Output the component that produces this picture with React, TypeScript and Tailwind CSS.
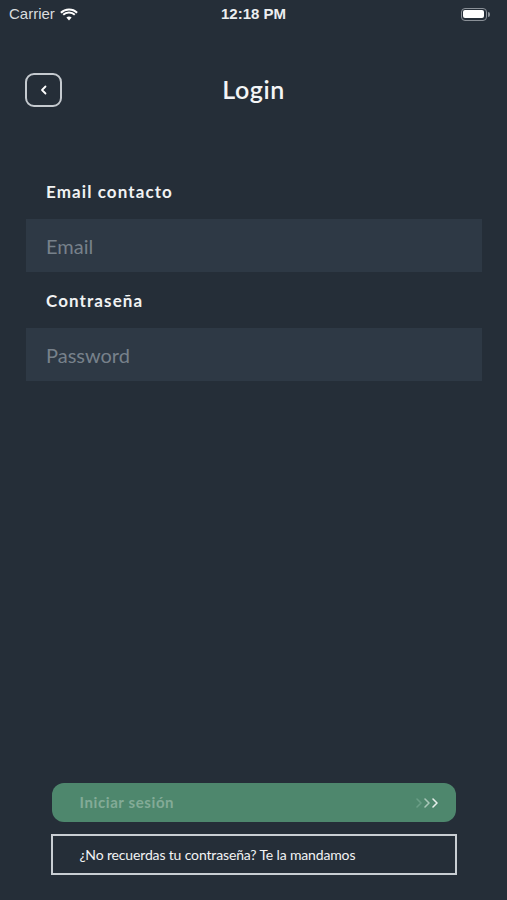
import React from 'react';

const font = { fontFamily: 'Lato, "Noto Sans", sans-serif' };

function StatusBar() {
  return (
    <div className="flex items-center justify-between h-[28px] px-[9px] text-white" style={{ fontFamily: '"Liberation Sans", Arial, sans-serif' }}>
      <div className="flex items-center gap-[5px] w-[120px]">
        <span className="text-[15px] text-[#d9dcdf]">Carrier</span>
        <svg width="18" height="13" viewBox="0 0 18 13" fill="#ffffff">
          <path d="M9 12.5l2.6-2.9a3.8 3.8 0 0 0-5.2 0z" />
          <path d="M9 5.6c2 0 3.8.8 5.1 2l1.4-1.6A9.3 9.3 0 0 0 9 3.4a9.3 9.3 0 0 0-6.5 2.6l1.4 1.6A7.2 7.2 0 0 1 9 5.6z" />
          <path d="M9 0.5C5.6 0.5 2.5 1.8 0.2 3.9l1.4 1.6A10.9 10.9 0 0 1 9 2.6c2.8 0 5.4 1.1 7.4 2.9l1.4-1.6A13 13 0 0 0 9 0.5z" />
        </svg>
      </div>
      <span className="text-[15px] font-bold text-[#eceef0]">12:18 PM</span>
      <div className="flex justify-end w-[120px] pr-[8px]">
        <div className="flex items-center">
          <div className="w-[26px] h-[13px] rounded-[4px] border border-[#8a9097] p-[1.5px]">
            <div className="w-full h-full rounded-[2px] bg-white" />
          </div>
          <div className="w-[2px] h-[5px] rounded-r-sm bg-[#8a9097] ml-[1px]" />
        </div>
      </div>
    </div>
  );
}

function Field({ label, placeholder, type }: { label: string; placeholder: string; type: string }) {
  return (
    <div className="flex flex-col">
      <label className="pl-[20px] h-[54px] flex items-center text-[17px] font-bold tracking-[1.1px] text-[#f1f2f3]">
        {label}
      </label>
      <input
        type={type}
        placeholder={placeholder}
        className="h-[53px] bg-[#2e3945] px-[20px] text-[20px] text-white placeholder:text-[#77818b] outline-none"
        style={font}
      />
    </div>
  );
}

export default function App() {
  return (
    <div className="flex flex-col w-[507px] h-[900px] bg-[#252e38]" style={font}>
      <StatusBar />
      <div className="relative flex items-center justify-center h-[64px] mt-[30px]">
        <button className="absolute left-[25px] top-[15px] w-[37px] h-[34px] rounded-[9px] border-2 border-[#c5cacf] flex items-center justify-center">
          <svg width="10" height="12" viewBox="0 0 10 12" fill="none" stroke="#ffffff" strokeWidth="1.8" strokeLinecap="round" strokeLinejoin="round">
            <path d="M6.5 2.5L3 6l3.5 3.5" />
          </svg>
        </button>
        <h1 className="text-[25px] font-semibold tracking-[0.6px] text-[#f4f5f6]">Login</h1>
      </div>
      <div className="flex flex-col px-[26px] mt-[43px] gap-[2px] w-[508px]">
        <Field label="Email contacto" placeholder="Email" type="email" />
        <Field label="Contraseña" placeholder="Password" type="password" />
      </div>
      <div className="flex-1" />
      <div className="flex flex-col items-center gap-[12px] pb-[25px]">
        <button className="w-[404px] h-[39px] rounded-[12px] bg-[#4e876d] flex items-center justify-between pl-[28px] pr-[14px]">
          <span className="text-[15px] font-bold tracking-[0.6px] text-[#83ab97]">Iniciar sesión</span>
          <svg width="28" height="14" viewBox="0 0 28 14" fill="none" strokeWidth="1.6" strokeLinecap="round" strokeLinejoin="round">
            <path d="M3 3l4 4-4 4" stroke="#6a9e86" />
            <path d="M11 3l4 4-4 4" stroke="#a9c7b8" />
            <path d="M19 3l4 4-4 4" stroke="#e6eeea" />
          </svg>
        </button>
        <button className="w-[406px] h-[41px] border-2 border-[#c9ced3] flex items-center pl-[27px]">
          <span className="text-[14px] tracking-[-0.15px] text-[#f2f3f4]">¿No recuerdas tu contraseña? Te la mandamos</span>
        </button>
      </div>
    </div>
  );
}
